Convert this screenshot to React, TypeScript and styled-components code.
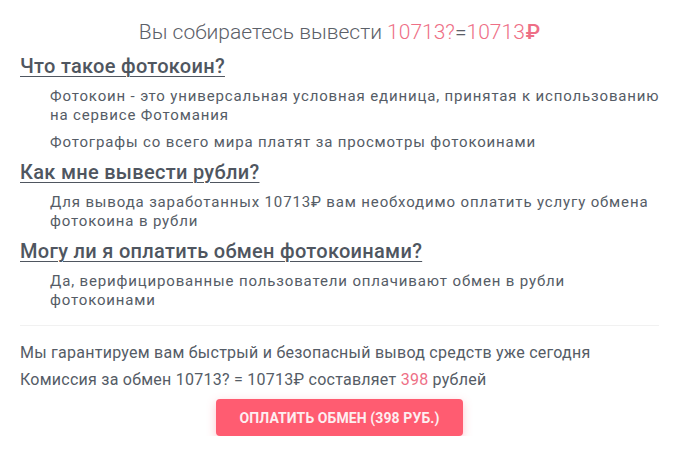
import React from 'react';
import styled, { createGlobalStyle } from 'styled-components';

const GlobalStyle = createGlobalStyle`
  body {
    margin: 0;
    background: #fff;
    font-family: Roboto, "Noto Sans", sans-serif;
    color: #565d66;
  }
`;

const Page = styled.section`
  padding: 18px 20px 0;
`;

const Title = styled.h1`
  margin: 0 0 7px;
  text-align: center;
  font-size: 21px;
  font-weight: 300;
  line-height: 28px;
  color: #5b6068;
`;

const Accent = styled.span<{ $bold?: boolean }>`
  color: #ee6f86;
  font-weight: ${(p) => (p.$bold ? 500 : 'inherit')};
  margin-left: ${(p) => (p.$bold ? '1px' : 0)};
`;

const Block = styled.div`
  & + & {
    margin-top: 7px;
  }
`;

const Question = styled.h2`
  margin: 0 0 8px;
  font-size: 20px;
  font-weight: 500;
  line-height: 26px;
  letter-spacing: 0.3px;
  color: #4f5660;
  text-decoration: underline;
  text-underline-offset: 3px;
  text-decoration-thickness: 1px;
`;

const Answer = styled.p`
  margin: 0 -10px 0 30px;
  font-size: 15px;
  line-height: 19px;
  letter-spacing: 0.85px;
  color: #555c66;

  & + & {
    margin-top: 8px;
  }
`;

const Divider = styled.hr`
  margin: 15px 0 16px;
  border: 0;
  border-top: 1px solid #f1f1f1;
`;

const Note = styled.p`
  margin: 0 0 5px;
  font-size: 16px;
  line-height: 22px;
  letter-spacing: 0.25px;
  color: #555c66;
`;

const Actions = styled.div`
  display: flex;
  justify-content: center;
  padding-top: 3px;
`;

const PayButton = styled.button`
  width: 247px;
  height: 37px;
  border: 0;
  border-radius: 4px;
  background: #ff5c71;
  color: #fdeef0;
  font-family: Roboto, sans-serif;
  font-size: 14px;
  font-weight: 700;
  letter-spacing: 0.1px;
  text-transform: uppercase;
  box-shadow: 0 3px 10px rgba(255, 90, 112, 0.35);
  cursor: pointer;
`;

const faq = [
  {
    q: 'Что такое фотокоин?',
    a: [
      'Фотокоин - это универсальная условная единица, принятая к использованию на сервисе Фотомания',
      'Фотографы со всего мира платят за просмотры фотокоинами',
    ],
  },
  {
    q: 'Как мне вывести рубли?',
    a: ['Для вывода заработанных 10713₽ вам необходимо оплатить услугу обмена фотокоина в рубли'],
  },
  {
    q: 'Могу ли я оплатить обмен фотокоинами?',
    a: ['Да, верифицированные пользователи оплачивают обмен в рубли фотокоинами'],
  },
];

export default function App() {
  return (
    <>
      <GlobalStyle />
      <Page>
        <Title>
          Вы собираетесь вывести <Accent>10713?</Accent>=<Accent>10713</Accent>
          <Accent $bold>₽</Accent>
        </Title>
        {faq.map((item) => (
          <Block key={item.q}>
            <Question>{item.q}</Question>
            {item.a.map((t) => (
              <Answer key={t}>{t}</Answer>
            ))}
          </Block>
        ))}
        <Divider />
        <Note>Мы гарантируем вам быстрый и безопасный вывод средств уже сегодня</Note>
        <Note>
          Комиссия за обмен 10713? = 10713₽ составляет <Accent>398</Accent> рублей
        </Note>
        <Actions>
          <PayButton>Оплатить обмен (398 руб.)</PayButton>
        </Actions>
      </Page>
    </>
  );
}
